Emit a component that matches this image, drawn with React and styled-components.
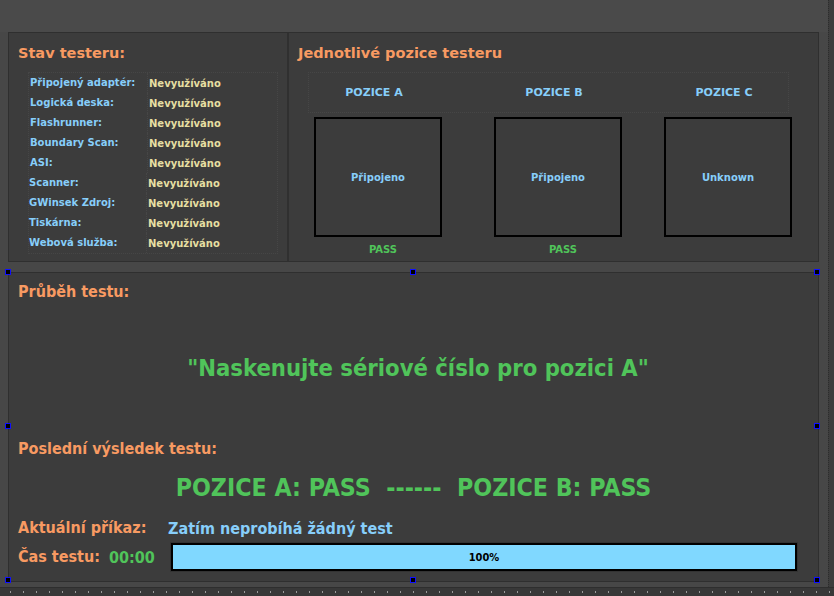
import React from "react";
import styled, { createGlobalStyle } from "styled-components";

const GlobalStyle = createGlobalStyle`
  html, body {
    margin: 0;
    padding: 0;
    background: #474747;
  }
  body {
    font-family: "DejaVu Sans", "Liberation Sans", sans-serif;
  }
`;

const stavRows = [
  ["Připojený adaptér:", "Nevyužíváno"],
  ["Logická deska:", "Nevyužíváno"],
  ["Flashrunner:", "Nevyužíváno"],
  ["Boundary Scan:", "Nevyužíváno"],
  ["ASI:", "Nevyužíváno"],
  ["Scanner:", "Nevyužíváno"],
  ["GWinsek Zdroj:", "Nevyužíváno"],
  ["Tiskárna:", "Nevyužíváno"],
  ["Webová služba:", "Nevyužíváno"],
];

const pozice = [
  { name: "POZICE A", state: "Připojeno", result: "PASS", width: 180 },
  { name: "POZICE B", state: "Připojeno", result: "PASS", width: 170 },
  { name: "POZICE C", state: "Unknown", result: "", width: 128 },
];

export default function App() {
  return (
    <>
      <GlobalStyle />
      <Screen>
        <TopBand />
        <Workspace>
          <Content>
            <TopPanel>
              <StavCell>
                <Title>Stav testeru:</Title>
                <StavTable>
                  {stavRows.map(([label, value], i) => (
                    <StavRow key={label} $shift={i > 4 ? -1 : 0}>
                      <StavLabel>{label}</StavLabel>
                      <StavValue>{value}</StavValue>
                    </StavRow>
                  ))}
                </StavTable>
              </StavCell>
              <PoziceCell>
                <Title>Jednotlivé pozice testeru</Title>
                <HeaderTable>
                  {pozice.map((p) => (
                    <HeaderLabel key={p.name}>{p.name}</HeaderLabel>
                  ))}
                </HeaderTable>
                <BoxRow>
                  {pozice.map((p) => (
                    <BoxColumn key={p.name} $width={p.width}>
                      <StateBox>{p.state}</StateBox>
                      <PassLabel>{p.result}</PassLabel>
                    </BoxColumn>
                  ))}
                </BoxRow>
              </PoziceCell>
            </TopPanel>

            <BottomPanel>
              <Handle $x="0%" $y="0%" />
              <Handle $x="50%" $y="0%" />
              <Handle $x="100%" $y="0%" />
              <Handle $x="0%" $y="50%" />
              <Handle $x="100%" $y="50%" />
              <Handle $x="0%" $y="100%" />
              <Handle $x="50%" $y="100%" />
              <Handle $x="100%" $y="100%" />

              <SectionTitle>Průběh testu:</SectionTitle>
              <Prompt>"Naskenujte sériové číslo pro pozici A"</Prompt>
              <SectionTitle $top={5}>Poslední výsledek testu:</SectionTitle>
              <ResultLine>{"POZICE A: PASS  ------  POZICE B: PASS"}</ResultLine>
              <InfoRow $top={15}>
                <SectionTitle $width={150}>Aktuální příkaz:</SectionTitle>
                <CommandText>Zatím neprobíhá žádný test</CommandText>
              </InfoRow>
              <InfoRow $top={4}>
                <SectionTitle>Čas testu:</SectionTitle>
                <TimeText>00:00</TimeText>
                <ProgressFrame>
                  <ProgressFill style={{ width: "100%" }} />
                  <ProgressText>100%</ProgressText>
                </ProgressFrame>
              </InfoRow>
            </BottomPanel>
          </Content>
          <RightGutter />
        </Workspace>
        <BottomGrid />
      </Screen>
    </>
  );
}

const Screen = styled.div`
  width: 834px;
  height: 596px;
  display: flex;
  flex-direction: column;
  background: #474747;
  overflow: hidden;
`;

const TopBand = styled.div`
  height: 32px;
  background: #4a4a4a;
`;

const Workspace = styled.div`
  display: flex;
  flex: 1;
`;

const Content = styled.div`
  width: 811px;
  margin-left: 8px;
  display: flex;
  flex-direction: column;
`;

const RightGutter = styled.div`
  margin-left: auto;
  width: 5px;
  margin-top: -32px;
  background: #3d3d3d;
  border-left: 1px dotted #2c2c2c;
`;

const BottomGrid = styled.div`
  height: 8px;
  background-color: #383838;
  border-top: 1px solid #2e2e2e;
  background-image: radial-gradient(circle, #9a9a9a 0.6px, transparent 0.8px);
  background-size: 13px 8px;
  background-position: 4px 0;
`;

const TopPanel = styled.div`
  height: 230px;
  display: flex;
  background: #3c3c3c;
  border: 1px solid #2f2f2f;
  box-sizing: border-box;
`;

const StavCell = styled.div`
  width: 280px;
  padding: 9px 0 0 9px;
  box-sizing: border-box;
  border-right: 2px solid #303030;
`;

const PoziceCell = styled.div`
  flex: 1;
  padding: 9px 0 0 9px;
  box-sizing: border-box;
`;

const Title = styled.div`
  font-family: "DejaVu Sans", sans-serif;
  font-weight: bold;
  font-size: 14.5px;
  line-height: 22px;
  color: #f89a62;
  white-space: nowrap;
`;

const StavTable = styled.div`
  margin: 8px 0 0 10px;
  width: 250px;
  border: 1px dotted #464646;
  box-sizing: border-box;
  display: grid;
  grid-template-rows: repeat(9, 20px);
`;

const StavRow = styled.div`
  display: grid;
  grid-template-columns: 119px 1fr;
  align-items: center;
  font-size: 10px;
  font-weight: bold;
  white-space: nowrap;
  transform: translateX(${(p) => p.$shift}px);
`;

const StavLabel = styled.span`
  color: #87cefa;
  padding-left: 1px;
  border-right: 1px dotted #464646;
  line-height: 20px;
`;

const StavValue = styled.span`
  color: #e6dfa2;
  padding-left: 1px;
`;

const HeaderTable = styled.div`
  margin: 8px 0 0 10px;
  width: 481px;
  height: 41px;
  border: 1px dotted #464646;
  box-sizing: border-box;
  display: grid;
  grid-template-columns: 130px 230px 110px 1fr;
  align-items: center;
`;

const HeaderLabel = styled.div`
  text-align: center;
  font-size: 11px;
  font-weight: bold;
  color: #87cefa;
`;

const BoxRow = styled.div`
  display: flex;
  margin: 4px 0 0 16px;
`;

const BoxColumn = styled.div`
  width: ${(p) => p.$width}px;
  display: flex;
  flex-direction: column;
`;

const StateBox = styled.div`
  width: 128px;
  height: 120px;
  box-sizing: border-box;
  border: 2px solid #000;
  display: flex;
  align-items: center;
  justify-content: center;
  font-size: 10px;
  font-weight: bold;
  color: #87cefa;
`;

const PassLabel = styled.div`
  width: 128px;
  margin-top: 6px;
  padding-left: 10px;
  box-sizing: border-box;
  text-align: center;
  font-size: 10px;
  font-weight: bold;
  line-height: 14px;
  height: 14px;
  color: #50c45a;
`;

const BottomPanel = styled.div`
  position: relative;
  margin-top: 10px;
  height: 310px;
  box-sizing: border-box;
  border: 1px solid #2f2f2f;
  background: #3c3c3c;
  padding: 8px 10px 0 9px;
  display: flex;
  flex-direction: column;
`;

const Handle = styled.div`
  position: absolute;
  left: ${(p) => p.$x};
  top: ${(p) => p.$y};
  width: 6px;
  height: 6px;
  margin: -4px 0 0 -4px;
  box-sizing: border-box;
  border: 1px solid #1010ff;
  background: #000;
  z-index: 2;
`;

const condensed = `
  font-family: "DejaVu Sans Condensed", "DejaVu Sans", sans-serif;
  font-stretch: condensed;
`;

const SectionTitle = styled.div`
  ${condensed}
  font-size: 16px;
  font-weight: bold;
  line-height: 22px;
  height: 22px;
  color: #f89a62;
  white-space: nowrap;
  margin-top: ${(p) => p.$top || 0}px;
  ${(p) => (p.$width ? `width: ${p.$width}px; flex: none;` : "")}
`;

const Prompt = styled.div`
  ${condensed}
  height: 130px;
  display: flex;
  align-items: center;
  justify-content: center;
  font-size: 23.6px;
  font-weight: bold;
  color: #50c45a;
  padding-left: 10px;
`;

const ResultLine = styled.div`
  ${condensed}
  margin-top: 14px;
  height: 28px;
  line-height: 28px;
  text-align: center;
  white-space: pre;
  font-size: 24.7px;
  font-weight: bold;
  color: #50c45a;
  padding-left: 1px;
`;

const InfoRow = styled.div`
  display: flex;
  align-items: center;
  margin-top: ${(p) => p.$top}px;
  min-height: 22px;
`;

const CommandText = styled.div`
  ${condensed}
  font-size: 16px;
  font-weight: bold;
  color: #87cefa;
`;

const TimeText = styled.div`
  ${condensed}
  margin-left: 9px;
  font-size: 16px;
  font-weight: bold;
  color: #50c45a;
`;

const ProgressFrame = styled.div`
  position: relative;
  margin-left: auto;
  margin-right: 11px;
  width: 626px;
  height: 28px;
  box-sizing: border-box;
  border: 2px solid #000;
  outline: 1px solid #333;
  background: #3c3c3c;
  display: flex;
  align-items: center;
  justify-content: center;
`;

const ProgressFill = styled.div`
  position: absolute;
  left: 0;
  top: 0;
  bottom: 0;
  background: #80d8ff;
`;

const ProgressText = styled.span`
  position: relative;
  ${condensed}
  font-size: 11px;
  font-weight: bold;
  color: #000;
`;
